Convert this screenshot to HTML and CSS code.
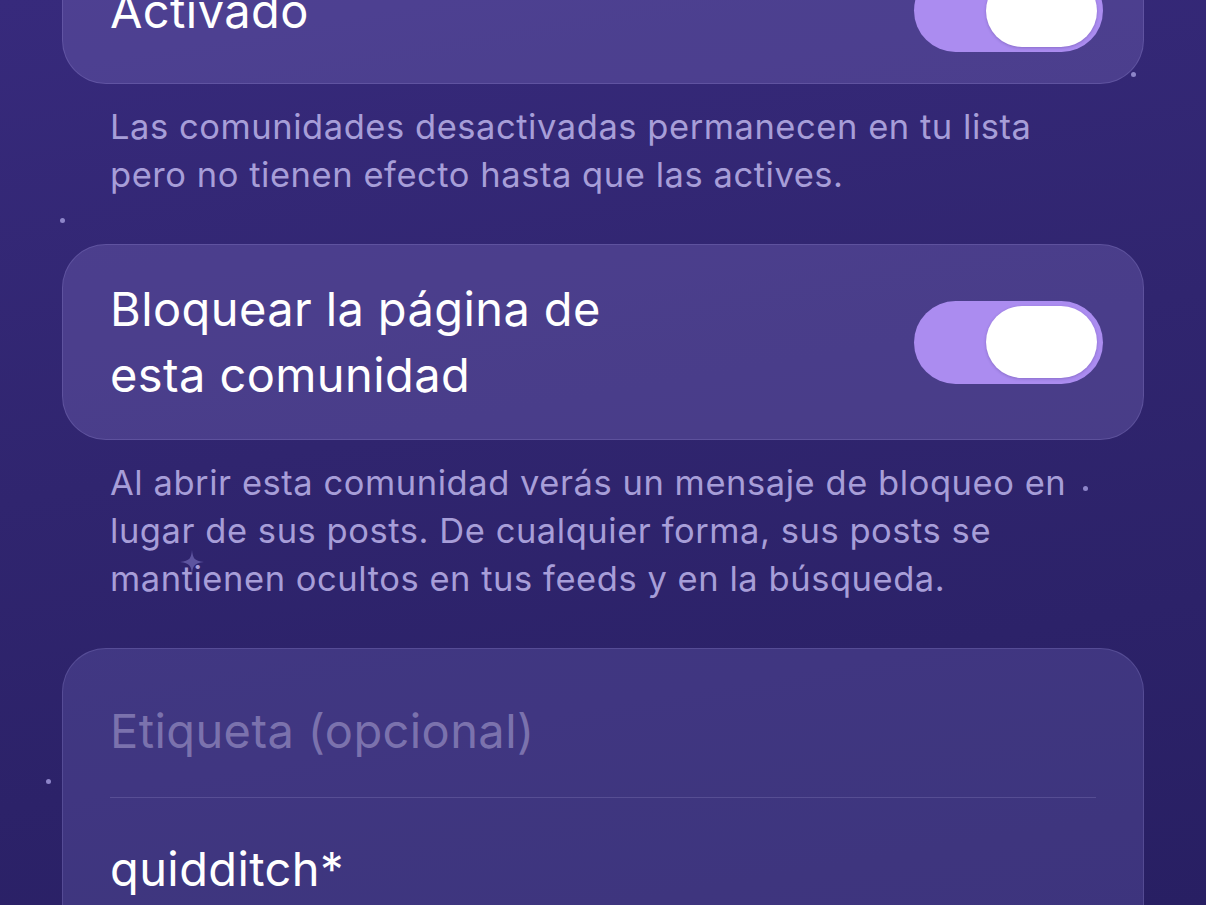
FILE: index.html
```html
<!DOCTYPE html>
<html lang="es">
<head>
  <meta charset="UTF-8"/>
  <meta name="viewport" content="width=device-width,initial-scale=1"/>
  <title>Comunidad</title>
  <link rel="stylesheet" href="styles.css">
</head>
<body>
  <!-- stars in the background -->
  <span class="dot" style="left:1131px;top:72px"></span>
  <span class="dot" style="left:60px;top:218px"></span>
  <span class="dot" style="left:1083px;top:486px"></span>
  <span class="dot" style="left:46px;top:779px"></span>
  <svg class="sparkle" viewBox="0 0 24 24" width="24" height="24">
    <path d="M12 0 C12.8 8 14 11 24 12 C14 13 12.8 16 12 24 C11.2 16 10 13 0 12 C10 11 11.2 8 12 0 Z"/>
  </svg>

  <main class="page">
    <div class="card card-first">
      <div class="row">
        <span class="label">Activado</span>
        <span class="switch on"><span class="knob"></span></span>
      </div>
    </div>
    <p class="note">Las comunidades desactivadas permanecen en tu lista<br>pero no tienen efecto hasta que las actives.</p>

    <div class="card">
      <div class="row">
        <span class="label">Bloquear la página de<br>esta comunidad</span>
        <span class="switch on"><span class="knob"></span></span>
      </div>
    </div>
    <p class="note">Al abrir esta comunidad verás un mensaje de bloqueo en<br>lugar de sus posts. De cualquier forma, sus posts se<br>mantienen ocultos en tus feeds y en la búsqueda.</p>

    <div class="card card-form">
      <div class="field field-top">
        <span class="placeholder">Etiqueta (opcional)</span>
      </div>
      <div class="field">
        <span class="value">quidditch*</span>
      </div>
    </div>
  </main>
</body>
</html>
```

FILE: styles.css
```css
:root {
  --card: rgba(118, 104, 186, 0.36);
  --card-border: rgba(200, 190, 255, 0.16);
  --text: #ffffff;
  --note: #a79ed8;
  --placeholder: #7b72ad;
  --accent: #ab8cf0;
  --divider: rgba(150, 140, 200, 0.28);
}

* {
  box-sizing: border-box;
  margin: 0;
  padding: 0;
}

html, body {
  height: 100%;
}

body {
  font-family: Inter, "Noto Sans", sans-serif;
  background: linear-gradient(170deg, #372a7c 0%, #30256f 45%, #281f63 100%);
  color: var(--text);
  overflow: hidden;
  position: relative;
}

.page {
  padding: 0 62px;
}

.card {
  background: var(--card);
  border: 1px solid var(--card-border);
  border-radius: 44px;
  padding: 31px 40px 31px 47px;
}

.card-first {
  margin-top: -63px;
}

.row {
  display: flex;
  align-items: center;
  justify-content: space-between;
}

.label {
  font-size: 47px;
  line-height: 66px;
  letter-spacing: 0.4px;
}

.switch {
  width: 189px;
  height: 83px;
  border-radius: 42px;
  background: var(--accent);
  display: flex;
  align-items: center;
  justify-content: flex-end;
  padding: 0 6px;
  flex-shrink: 0;
}

.knob {
  width: 111px;
  height: 72px;
  border-radius: 36px;
  background: #fff;
  box-shadow: 0 1px 3px rgba(40, 20, 90, 0.25);
}

.note {
  color: var(--note);
  font-size: 34.5px;
  line-height: 48px;
  padding: 19px 48px 45px;
  letter-spacing: 0.55px;
}

.card-form {
  padding: 0 47px;
  background: rgba(100, 92, 172, 0.36);
  border-bottom: none;
  border-bottom-left-radius: 0;
  border-bottom-right-radius: 0;
  height: 300px;
}

.field {
  font-size: 47px;
  line-height: 66px;
  padding: 38px 0 30px;
  letter-spacing: 0.4px;
}

.field-top {
  padding: 49px 0 33px;
  border-bottom: 1px solid var(--divider);
}

.placeholder {
  color: var(--placeholder);
}

.dot {
  position: absolute;
  width: 5px;
  height: 5px;
  border-radius: 50%;
  background: #8d85c9;
}

.sparkle {
  position: absolute;
  left: 180px;
  top: 550px;
  fill: #5d549f;
}
```
